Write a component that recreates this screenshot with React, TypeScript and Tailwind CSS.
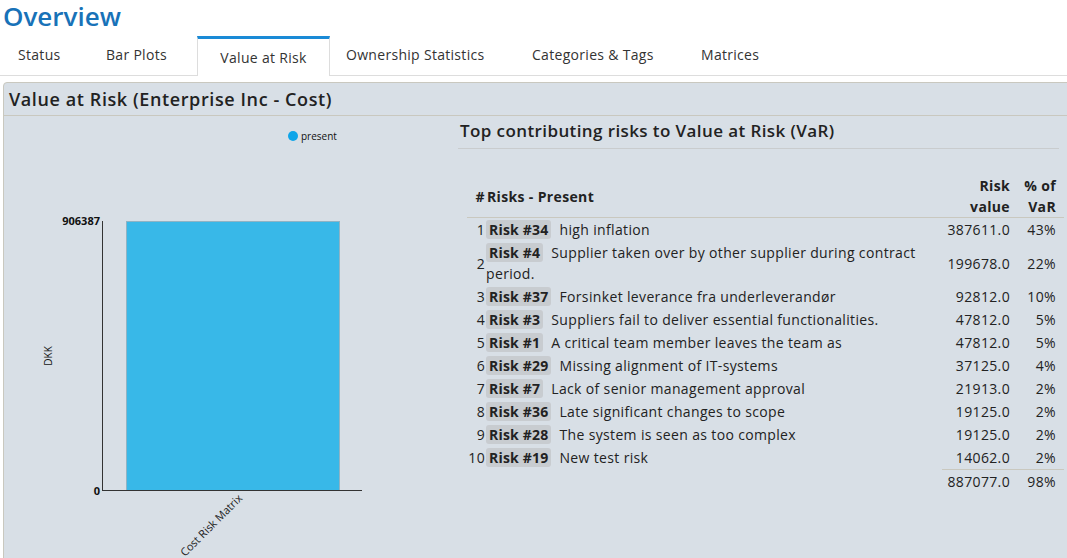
const font = "font-['Open_Sans','Liberation_Sans',sans-serif]";

const tabs = [
  { name: "Status", active: false, cls: "w-[84px] pl-[18px]" },
  { name: "Bar Plots", active: false, cls: "w-[113px] pl-[22px]" },
  { name: "Value at Risk", active: true, cls: "" },
  { name: "Ownership Statistics", active: false, cls: "w-[180px] pl-[16px]" },
  { name: "Categories & Tags", active: false, cls: "w-[169px] pl-[22px]" },
  { name: "Matrices", active: false, cls: "w-[120px] pl-[22px]" },
];

const risks = [
  { n: 1, id: "#34", text: "high inflation", value: "387611.0", pct: "43%" },
  { n: 2, id: "#4", text: "Supplier taken over by other supplier during contract period.", value: "199678.0", pct: "22%" },
  { n: 3, id: "#37", text: "Forsinket leverance fra underleverandør", value: "92812.0", pct: "10%" },
  { n: 4, id: "#3", text: "Suppliers fail to deliver essential functionalities.", value: "47812.0", pct: "5%" },
  { n: 5, id: "#1", text: "A critical team member leaves the team as", value: "47812.0", pct: "5%" },
  { n: 6, id: "#29", text: "Missing alignment of IT-systems", value: "37125.0", pct: "4%" },
  { n: 7, id: "#7", text: "Lack of senior management approval", value: "21913.0", pct: "2%" },
  { n: 8, id: "#36", text: "Late significant changes to scope", value: "19125.0", pct: "2%" },
  { n: 9, id: "#28", text: "The system is seen as too complex", value: "19125.0", pct: "2%" },
  { n: 10, id: "#19", text: "New test risk", value: "14062.0", pct: "2%" },
];

function Chart() {
  return (
    <svg width="450" height="441" className="block">
      {/* legend */}
      <circle cx="289" cy="20" r="5" fill="#0ea5e9" />
      <text x="297" y="24" fontSize="10" fill="#111" fontFamily="Open Sans, sans-serif">present</text>

      {/* bar */}
      <rect x="122.5" y="105.5" width="213" height="269" fill="#38b8e8" stroke="#8fb3c4" strokeWidth="1" />

      {/* axes */}
      <line x1="98.5" y1="105" x2="98.5" y2="375" stroke="#333" strokeWidth="1" />
      <line x1="98" y1="374.5" x2="358" y2="374.5" stroke="#333" strokeWidth="1" />

      <text x="96" y="109" fontSize="11" fontWeight="700" textAnchor="end" fill="#111" fontFamily="Open Sans, sans-serif">906387</text>
      <text x="96" y="379" fontSize="11" fontWeight="700" textAnchor="end" fill="#111" fontFamily="Open Sans, sans-serif">0</text>

      <text x="0" y="0" fontSize="10" textAnchor="middle" fill="#111" fontFamily="Open Sans, sans-serif" transform="translate(48 240) rotate(-90)">DKK</text>
      <text x="0" y="0" fontSize="11" textAnchor="end" fill="#222" fontFamily="Open Sans, sans-serif" transform="translate(239 383) rotate(-45)">Cost Risk Matrix</text>
    </svg>
  );
}

export default function App() {
  return (
    <div className={`w-[1067px] h-[558px] overflow-hidden bg-white text-[#333] ${font}`}>
      <h1 className="pl-[3px] text-[26px] leading-[32px] font-semibold text-[#1872b8]">Overview</h1>

      {/* Tabs */}
      <div className="mt-[5px] flex items-end border-b border-[#dddddd] h-[39px]">
        {tabs.map((t) =>
          t.active ? (
            <div
              key={t.name}
              className="h-[40px] -mb-px w-[133px] border-t-[3px] border-t-[#1a8ad6] border-x border-x-[#dddddd] bg-white flex items-center justify-center text-[14px] tracking-[0.3px]"
            >
              {t.name}
            </div>
          ) : (
            <div key={t.name} className={`h-[38px] pb-[4px] flex items-center text-[14px] tracking-[0.3px] ${t.cls}`}>
              {t.name}
            </div>
          )
        )}
      </div>

      {/* Panel */}
      <div className="mt-[6px] ml-[3px] w-[1070px] h-[480px] border border-[#c9c8bf] rounded-tl-[4px] bg-[#d8dfe6]">
        <div className="h-[33px] border-b border-[#c9c8bf] flex items-center pl-[5px] text-[18px] tracking-[0.6px] font-semibold text-[#222]">
          Value at Risk (Enterprise Inc - Cost)
        </div>

        <div className="flex">
          <div className="w-[451px] shrink-0">
            <Chart />
          </div>

          <div className="w-[607px] pt-[4px]">
            <div className="mx-[3px] pl-[2px] pb-[6px] border-b border-[#c9ccce] text-[17px] leading-[22px] tracking-[0.4px] font-semibold text-[#222]">
              Top contributing risks to Value at Risk (VaR)
            </div>

            <table className="mt-[26px] ml-[12px] w-[597px] border-collapse text-[14px] tracking-[0.35px] text-[#222]">
              <thead>
                <tr className="border-b border-[#c9c8bf] font-bold leading-[21px]">
                  <th className="w-[18px] pl-[4px] text-right align-middle">#</th>
                  <th className="text-left pl-[2px] align-middle pt-[1px]">Risks - Present</th>
                  <th className="w-[80px] text-right pr-[8px] align-top">
                    Risk
                    <br />
                    value
                  </th>
                  <th className="w-[46px] text-right pr-[8px] align-top">
                    % of
                    <br />
                    VaR
                  </th>
                </tr>
              </thead>
              <tbody>
                {risks.map((r) => (
                  <tr key={r.n} className="leading-[21px]">
                    <td className="text-right align-middle py-px">{r.n}</td>
                    <td className="pl-px pr-[10px] py-px">
                      <span className="inline-block leading-[19px] bg-[#c8ccd0] rounded-[3px] px-[3px] font-bold tracking-[0.2px] mr-[8px]">
                        Risk {r.id}
                      </span>
                      {r.text}
                    </td>
                    <td className="text-right pr-[8px] align-middle py-px">{r.value}</td>
                    <td className="text-right pr-[8px] align-middle py-px">{r.pct}</td>
                  </tr>
                ))}
                <tr className="leading-[21px]">
                  <td />
                  <td />
                  <td className="pt-0 pl-[4px]">
                    <div className="border-t border-[#c9c8bf] pt-px pr-[8px] text-right">887077.0</div>
                  </td>
                  <td className="pt-0">
                    <div className="border-t border-[#c9c8bf] pt-px pr-[8px] text-right">98%</div>
                  </td>
                </tr>
              </tbody>
            </table>
          </div>
        </div>
      </div>
    </div>
  );
}
